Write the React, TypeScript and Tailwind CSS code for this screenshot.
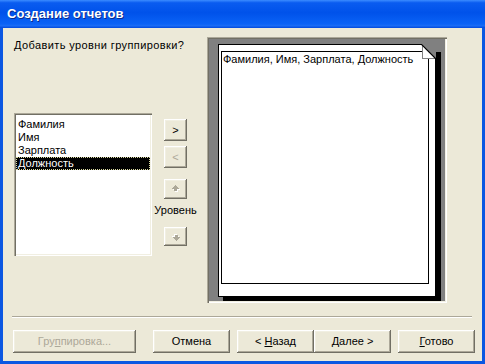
import React from 'react';

const raised =
  'shadow-[inset_-1px_-1px_0_#716f64,inset_1px_1px_0_#fff,inset_-2px_-2px_0_#aca899,inset_2px_2px_0_#f1efe2]';
const sunken =
  'shadow-[inset_1px_1px_0_#aca899,inset_2px_2px_0_#716f64,inset_-1px_-1px_0_#fff,inset_-2px_-2px_0_#f1efe2]';

const fields = ['Фамилия', 'Имя', 'Зарплата', 'Должность'];

const Arrow: React.FC<{ down?: boolean }> = ({ down = false }) => (
  <svg width="8" height="8" viewBox="0 0 8 8" className={down ? 'rotate-180' : ''} shapeRendering="crispEdges">
    <g fill="#fff" transform="translate(1,1)">
      <rect x="3" y="0" width="1" height="1" />
      <rect x="2" y="1" width="3" height="1" />
      <rect x="1" y="2" width="5" height="1" />
      <rect x="0" y="3" width="7" height="1" />
      <rect x="2" y="4" width="3" height="2" />
    </g>
    <g fill="#aca899">
      <rect x="3" y="0" width="1" height="1" />
      <rect x="2" y="1" width="3" height="1" />
      <rect x="1" y="2" width="5" height="1" />
      <rect x="0" y="3" width="7" height="1" />
      <rect x="2" y="4" width="3" height="2" />
    </g>
  </svg>
);

const SideButton: React.FC<{ children: React.ReactNode; className?: string; disabled?: boolean }> = ({
  children,
  className = '',
  disabled = false,
}) => (
  <div
    className={`w-[23px] flex items-center justify-center bg-[#ece9d8] ${raised} ${
      disabled ? 'text-[#aca899]' : 'text-black'
    } ${className}`}
  >
    {children}
  </div>
);

const DialogButton: React.FC<{ children: React.ReactNode; className?: string; disabled?: boolean }> = ({
  children,
  className = '',
  disabled = false,
}) => (
  <div
    className={`h-[23px] w-[77px] flex items-center justify-center bg-[#ece9d8] ${raised} ${
      disabled ? 'text-[#aca899]' : 'text-black'
    } ${className}`}
  >
    <span>{children}</span>
  </div>
);

export default function App() {
  return (
    <div className="w-[485px] h-[364px] flex flex-col bg-[#0b57e2] font-['Liberation_Sans',Arial,sans-serif] text-[11px] leading-[13px] select-none">
      {/* title bar */}
      <div className="h-[28px] flex items-center pl-[7px] bg-[linear-gradient(180deg,#3b8cff_0%,#0a5cf0_10%,#0052ea_45%,#0a62f6_85%,#1a6cf6_92%,#0048dc_100%)]">
        <span className="text-white font-bold text-[13px] leading-[16px] -mt-[1px] [text-shadow:1px_1px_0_#0b2a8c]">
          Создание отчетов
        </span>
      </div>

      {/* body */}
      <div className="flex-1 mx-[3px] mb-[3px] bg-[#ece9d8] flex flex-col">
        <div className="flex pt-[9px] pl-[11px]">
          <div className="w-[193px] flex flex-col">
            <div className="mt-[2px] text-black tracking-[0.4px]">Добавить уровни группировки?</div>
            <div className="flex mt-[61px]">
              <div className={`w-[138px] h-[143px] bg-white p-[2px] pt-[5px] ${sunken}`}>
                {fields.map((f, i) =>
                  i === fields.length - 1 ? (
                    <div
                      key={f}
                      className="h-[13px] pl-[2px] bg-black text-white outline-1 outline-dotted outline-[#d8d8a0] -outline-offset-1"
                    >
                      {f}
                    </div>
                  ) : (
                    <div key={f} className="h-[13px] pl-[2px] text-black">
                      {f}
                    </div>
                  )
                )}
              </div>
              <div className="w-[47px] flex flex-col items-center">
                <SideButton className="mt-[6px] h-[22px]">&gt;</SideButton>
                <SideButton className="mt-[5px] h-[22px]" disabled>
                  &lt;
                </SideButton>
                <SideButton className="mt-[11px] h-[20px]" disabled>
                  <Arrow />
                </SideButton>
                <div className="mt-[5px] text-black">Уровень</div>
                <SideButton className="mt-[10px] h-[19px]" disabled>
                  <Arrow down />
                </SideButton>
              </div>
            </div>
          </div>

          {/* preview frame */}
          <div className={`w-[240px] h-[266px] bg-[#808080] p-[2px] ${sunken}`}>
            <div className="relative ml-[9px] mt-[5px] w-[218px] h-[253px] bg-white border border-black shadow-[5px_4px_0_#000]">
              <div className="ml-[2px] mt-[6px] w-[208px] h-[233px] border border-black pl-[1px] pt-[1px] text-black whitespace-nowrap">
                Фамилия, Имя, Зарплата, Должность
              </div>
              <svg
                width="20"
                height="15"
                viewBox="0 0 20 15"
                className="absolute -top-[1px] right-[-6px]"
                shapeRendering="crispEdges"
              >
                <polygon points="0,0 20,0 20,8 15,8 15,15" fill="#808080" />
                <polygon points="1,1 1,14 14,14" fill="#fff" stroke="#808080" strokeWidth="1" />
                <line x1="0" y1="0" x2="15" y2="15" stroke="#000" strokeWidth="1.2" shapeRendering="auto" />
              </svg>
            </div>
          </div>
        </div>

        {/* separator */}
        <div className="ml-[9px] mt-[13px] w-[460px] h-[2px] border-t border-[#aca899] border-b border-b-white" />

        {/* buttons */}
        <div className="flex pl-[10px] mt-[12px]">
          <DialogButton className="w-[123px]" disabled>
            Гру<u>п</u>пировка...
          </DialogButton>
          <DialogButton className="ml-[17px]">Отмена</DialogButton>
          <DialogButton className="ml-[7px]">
            &lt; <u>Н</u>азад
          </DialogButton>
          <DialogButton>
            <u>Д</u>алее &gt;
          </DialogButton>
          <DialogButton className="ml-[7px]">
            <u>Г</u>отово
          </DialogButton>
        </div>
      </div>
    </div>
  );
}
